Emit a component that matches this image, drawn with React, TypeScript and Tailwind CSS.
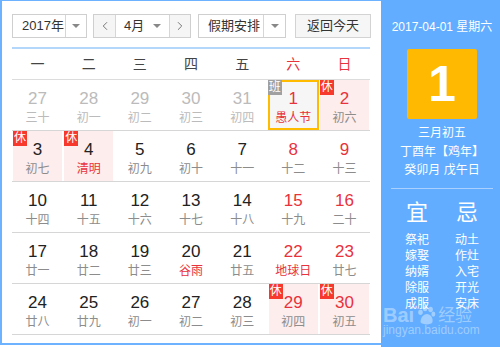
import { ChevronLeft, ChevronRight } from 'lucide-react';

type Day = {
  n: number;
  l: string;
  prev?: boolean;
  redNum?: boolean;
  redLunar?: boolean;
  rest?: boolean;
  work?: boolean;
  sel?: boolean;
};

const rows: Day[][] = [
  [
    { n: 27, l: '三十', prev: true },
    { n: 28, l: '初一', prev: true },
    { n: 29, l: '初二', prev: true },
    { n: 30, l: '初三', prev: true },
    { n: 31, l: '初四', prev: true },
    { n: 1, l: '愚人节', redNum: true, redLunar: true, work: true, sel: true },
    { n: 2, l: '初六', redNum: true, rest: true },
  ],
  [
    { n: 3, l: '初七', rest: true },
    { n: 4, l: '清明', rest: true, redLunar: true },
    { n: 5, l: '初九' },
    { n: 6, l: '初十' },
    { n: 7, l: '十一' },
    { n: 8, l: '十二', redNum: true },
    { n: 9, l: '十三', redNum: true },
  ],
  [
    { n: 10, l: '十四' },
    { n: 11, l: '十五' },
    { n: 12, l: '十六' },
    { n: 13, l: '十七' },
    { n: 14, l: '十八' },
    { n: 15, l: '十九', redNum: true },
    { n: 16, l: '二十', redNum: true },
  ],
  [
    { n: 17, l: '廿一' },
    { n: 18, l: '廿二' },
    { n: 19, l: '廿三' },
    { n: 20, l: '谷雨', redLunar: true },
    { n: 21, l: '廿五' },
    { n: 22, l: '地球日', redNum: true, redLunar: true },
    { n: 23, l: '廿七', redNum: true },
  ],
  [
    { n: 24, l: '廿八' },
    { n: 25, l: '廿九' },
    { n: 26, l: '初一' },
    { n: 27, l: '初二' },
    { n: 28, l: '初三' },
    { n: 29, l: '初四', redNum: true, rest: true },
    { n: 30, l: '初五', redNum: true, rest: true },
  ],
];

const weekdays = ['一', '二', '三', '四', '五', '六', '日'];
const yi = ['祭祀', '嫁娶', '纳婿', '除服', '成服'];
const ji = ['动土', '作灶', '入宅', '开光', '安床'];

const font = { fontFamily: '"Liberation Sans", "Noto Sans CJK SC", sans-serif' };

const Caret = () => (
  <svg width="8" height="4" viewBox="0 0 8 4" className="block">
    <path d="M0 0 L8 0 L4 4 Z" fill="#888" />
  </svg>
);

const Cell = ({ d }: { d: Day }) => {
  let numColor = 'text-[#222]';
  if (d.prev) numColor = 'text-[#bbb]';
  else if (d.redNum) numColor = 'text-[#e8323c]';
  let lunarColor = 'text-[#8c8c8c]';
  if (d.prev) lunarColor = 'text-[#bbb]';
  else if (d.redLunar) lunarColor = 'text-[#e8323c]';

  return (
    <div
      className={`relative h-[50px] flex flex-col items-center pt-[9px] ${
        d.rest ? 'bg-[#fdeded]' : d.sel ? 'bg-[#f6f6f6]' : 'bg-white'
      } ${d.rest ? 'mx-[1px]' : ''}`}
    >
      {d.sel && <div className="absolute inset-0 border-2 border-[#ffbb00]" />}
      {d.rest && (
        <div className="absolute left-0 top-0 w-[14px] h-[15px] bg-[#f7382c] text-white text-[12px] leading-[15px] text-center">
          休
        </div>
      )}
      {d.work && (
        <div className="absolute left-0 top-0 w-[14px] h-[15px] bg-[#a0a0a0] text-white text-[12px] leading-[15px] text-center">
          班
        </div>
      )}
      <div className={`text-[17px] leading-[20px] ${numColor}`}>{d.n}</div>
      <div className={`text-[12px] leading-[16px] mt-[1px] ${lunarColor}`}>{d.l}</div>
    </div>
  );
};

export default function App() {
  return (
    <div className="w-[500px] h-[347px] flex bg-white overflow-hidden" style={font}>
      {/* Left: calendar */}
      <div className="w-[381px] h-[345px] border-l-2 border-t border-b-2 border-[#6db2ff] pl-[10px] pt-[13px]">
        {/* Toolbar */}
        <div className="flex items-center h-[24px] text-[13px] text-[#333]">
          <div className="w-[75px] h-[24px] flex border border-[#cfcfcf] bg-white">
            <div className="w-[52px] flex items-center pl-[9px]">2017年</div>
            <div className="flex-1 border-l border-[#d6d6d6] flex items-center justify-center">
              <Caret />
            </div>
          </div>
          <div className="ml-[6px] w-[98px] h-[24px] flex border border-[#cfcfcf]">
            <div className="w-[22px] bg-[#f5f5f5] border-r border-[#d6d6d6] flex items-center justify-center">
              <ChevronLeft size={14} strokeWidth={1.5} color="#666" />
            </div>
            <div className="flex-1 flex items-center pl-[8px] pr-[8px] justify-between bg-white">
              <span>4月</span>
              <Caret />
            </div>
            <div className="w-[21px] bg-[#f5f5f5] border-l border-[#d6d6d6] flex items-center justify-center">
              <ChevronRight size={14} strokeWidth={1.5} color="#666" />
            </div>
          </div>
          <div className="ml-[7px] w-[88px] h-[24px] flex border border-[#cfcfcf] bg-white">
            <div className="w-[64px] flex items-center pl-[9px]">假期安排</div>
            <div className="flex-1 border-l border-[#d6d6d6] flex items-center justify-center">
              <Caret />
            </div>
          </div>
          <div className="ml-[9px] w-[76px] h-[24px] border border-[#d3d3d3] bg-[#f6f6f6] flex items-center justify-center">
            返回今天
          </div>
        </div>

        {/* blue line */}
        <div className="mt-[9px] w-[358px] h-[2px] bg-[#b3d6fb]" />

        {/* weekday header */}
        <div className="w-[358px] grid grid-cols-7 h-[31px] border-b border-[#dcdcdc] text-[14px]">
          {weekdays.map((w, i) => (
            <div
              key={w}
              className={`flex items-center justify-center ${i >= 5 ? 'text-[#e8323c]' : 'text-[#444]'}`}
            >
              {w}
            </div>
          ))}
        </div>

        {/* days */}
        <div className="w-[358px]">
          {rows.map((r, i) => (
            <div key={i} className="grid grid-cols-7 border-b border-[#d6d6d6]">
              {r.map((d) => (
                <Cell key={`${i}-${d.n}`} d={d} />
              ))}
            </div>
          ))}
        </div>
      </div>

      {/* Right: detail panel */}
      <div className="relative flex-1 h-[347px] bg-[#62adff] text-white flex flex-col items-center pl-[3px]">
        <div className="mt-[18px] text-[12px] leading-[18px]">2017-04-01 星期六</div>
        <div className="mt-[13px] w-[70px] h-[70px] rounded-[2px] bg-[#ffb900] flex items-center justify-center text-[50px] font-bold leading-none">
          1
        </div>
        <div className="mt-[5px] text-[12px] leading-[18.5px] text-center">
          <div>三月初五</div>
          <div>丁酉年【鸡年】</div>
          <div>癸卯月 戊午日</div>
        </div>
        <div className="mt-[8px] w-[102px] h-[1px] bg-[#a9d0ff]" />
        <div className="mt-[11px] flex gap-[26px]">
          <div className="flex flex-col items-center w-[24px]">
            <div className="text-[22px] leading-[26px]">宜</div>
            <div className="mt-[6px] text-[12px] leading-[16px]">
              {yi.map((t) => (
                <div key={t}>{t}</div>
              ))}
            </div>
          </div>
          <div className="flex flex-col items-center w-[24px]">
            <div className="text-[22px] leading-[26px]">忌</div>
            <div className="mt-[6px] text-[12px] leading-[16px]">
              {ji.map((t) => (
                <div key={t}>{t}</div>
              ))}
            </div>
          </div>
        </div>

        {/* watermark */}
        <div className="absolute left-[2px] top-[304px] flex items-center text-white/40 font-bold text-[20px] leading-none">
          <span>Bai</span>
          <svg width="22" height="22" viewBox="0 0 24 24" className="mx-[1px]">
            <g fill="rgba(255,255,255,0.4)">
              <ellipse cx="6" cy="9" rx="2.5" ry="3" />
              <ellipse cx="11" cy="5" rx="2.5" ry="3" />
              <ellipse cx="17" cy="6" rx="2.5" ry="3" />
              <ellipse cx="20" cy="11" rx="2.2" ry="2.8" />
              <path d="M6 20 C6 14 10 11 13 11 C17 11 20 15 19 20 C18 23 8 23 6 20 Z" />
            </g>
          </svg>
          <span className="text-[17px] font-normal">经验</span>
        </div>
        <div className="absolute left-[2px] top-[324px] text-[12px] text-white/40 leading-none">
          jingyan.baidu.com
        </div>
      </div>
    </div>
  );
}
